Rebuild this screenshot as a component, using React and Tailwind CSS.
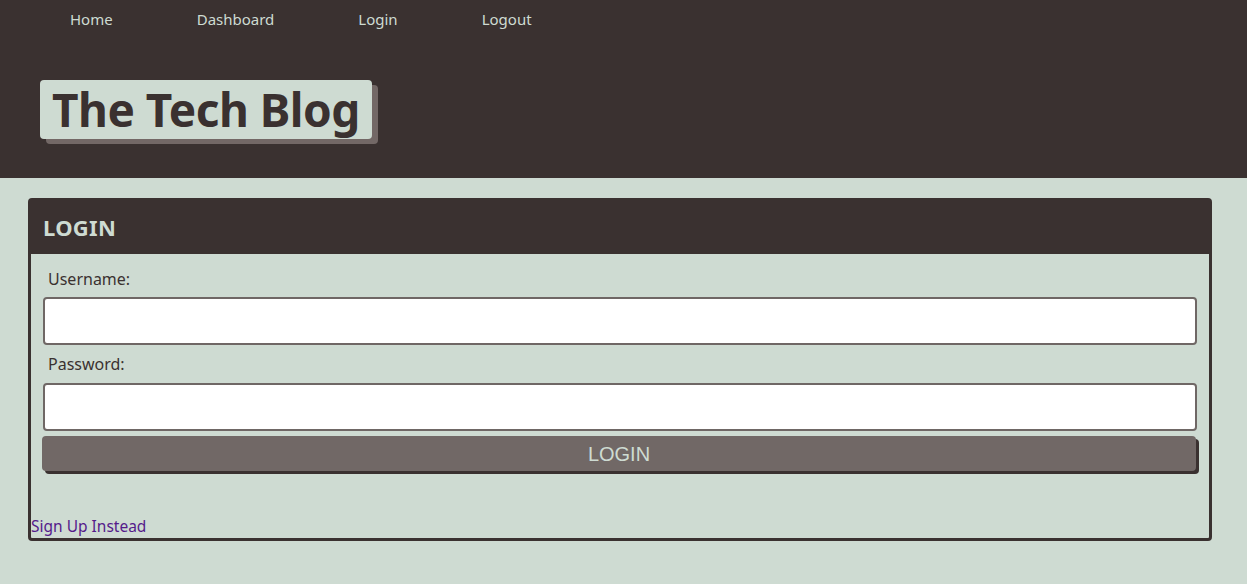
import React from "react";

const navLinks = ["Home", "Dashboard", "Login", "Logout"];

export default function App() {
  return (
    <div className="min-h-screen bg-[#cedbd2] font-['Noto_Sans',sans-serif] text-[#3a3130]">
      {/* Header */}
      <header className="bg-[#3a3130] h-[178px]">
        <nav className="flex gap-[84px] pl-[70px] pt-[7px] text-[15px] leading-[24px] text-[#cedbd2]">
          {navLinks.map((link) => (
            <a key={link} href="#" className="block">
              {link}
            </a>
          ))}
        </nav>
        <div className="pl-[40px] pt-[49px]">
          <h1 className="inline-block bg-[#cedbd2] text-[#3a3130] rounded-[4px] shadow-[6px_5px_0_#736866] pl-[12px] pr-[12px] text-[46px] leading-[59px] font-bold tracking-[-0.5px]">
            The Tech Blog
          </h1>
        </div>
      </header>

      {/* Login card */}
      <main className="pl-[28px] pr-[35px] pt-[20px] pb-[44px]">
        <div className="border-[3px] border-[#3a3130] rounded-[4px]">
          <div className="bg-[#3a3130] h-[53px] flex items-center pl-[12px]">
            <h2 className="text-[22px] font-bold text-[#cedbd2] tracking-[0.3px]">LOGIN</h2>
          </div>
          <form className="px-[12px] pt-[13px]">
            <label className="block pl-[5px] text-[16px] leading-[24px]">Username:</label>
            <input
              type="text"
              className="block w-full h-[48px] mt-[6px] bg-white border-2 border-[#6f6765] rounded-[4px]"
            />
            <label className="block pl-[5px] mt-[7px] text-[16px] leading-[24px]">Password:</label>
            <input
              type="password"
              className="block w-full h-[48px] mt-[7px] bg-white border-2 border-[#6f6765] rounded-[4px]"
            />
            <button
              type="button"
              className="block w-full -ml-[1px] h-[35px] mt-[5px] bg-[#716866] text-[#cedbd2] rounded-[4px] shadow-[3px_3px_0_#3a3130] font-['Liberation_Sans',sans-serif] text-[20px]"
            >
              LOGIN
            </button>
          </form>
          <a href="#" className="block mt-[43px] text-[15.5px] leading-[24px] text-[#551a8b]">
            Sign Up Instead
          </a>
        </div>
      </main>
    </div>
  );
}
